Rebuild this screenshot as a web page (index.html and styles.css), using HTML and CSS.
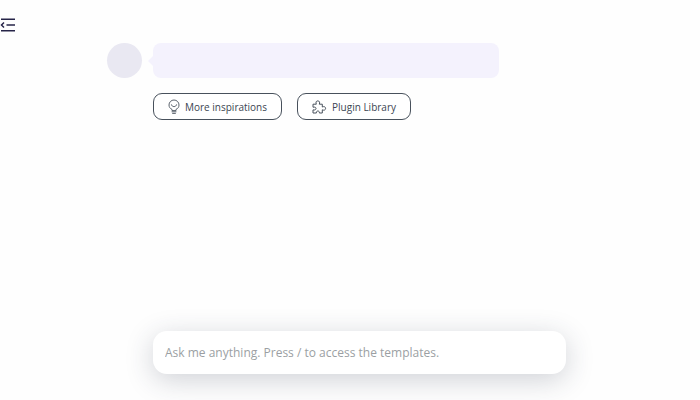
FILE: index.html
```
<!DOCTYPE html>
<html lang="en">
<head>
<meta charset="utf-8">
<title>Chat</title>
<link rel="stylesheet" href="styles.css">
</head>
<body>
  <header class="topbar">
    <button type="button" class="menu_toggle" aria-label="Collapse menu">
      <svg width="16" height="14" viewBox="0 0 16 14" fill="none" stroke="#262448" stroke-width="1.5">
        <path d="M1 1.2H15M6.5 7H15M1 12.8H15"/>
        <path d="M4 4.5L1.5 7L4 9.5"/>
      </svg>
    </button>
  </header>

  <main class="chat">
    <div class="message">
      <div class="avatar"></div>
      <div class="bubble"></div>
    </div>

    <div class="actions">
      <button type="button" class="action">
        <svg width="12" height="16" viewBox="0 0 12 16" fill="none" stroke="#48515c" stroke-width="0.9">
          <path d="M4 10.4C2 9.5 1 8 1 6A5 5 0 0 1 11 6C11 8 10 9.5 8 10.4V11.6H4Z"/>
          <path d="M3.4 5.4C3.7 7 4.8 7.6 6 7.6S8.3 7 8.6 5.4"/>
          <path d="M3.6 12.8H8.4M4.2 14.4H7.8"/>
        </svg>
        More inspirations
      </button>
      <button type="button" class="action">
        <svg width="15" height="14" viewBox="0 0 15 14" fill="none" stroke="#48515c" stroke-width="1" stroke-linejoin="round">
          <path d="M1 4.2H4.3C3.5 2.3 4.2 .9 5.8 .9S8.1 2.3 7.3 4.2H10.3V7C12.1 6.1 13.6 6.9 13.6 8.4S12.1 10.7 10.3 9.8V13H7.4C7.5 11.7 6.9 11 5.9 11S4.3 11.7 4.4 13H1V9.9C3 10.3 4 9.6 4 8.5S3 6.8 1 7.2Z"/>
        </svg>
        Plugin Library
      </button>
    </div>

    <form class="ask">
      <input type="text" class="ask_input" aria-label="Message" placeholder="Ask me anything. Press / to access the templates.">
    </form>
  </main>
</body>
</html>
```
FILE: styles.css
```
*
{
  box-sizing:border-box;
}

body
{
  display:flex;
  flex-direction:column;
  min-height:100vh;
  margin:0;
  background-color:#fefefe;
  font-family:"Open Sans", sans-serif;
}

button, input
{
  font-family:inherit;
}

.topbar
{
  padding-top:18px;
  height:43px;
}

.menu_toggle
{
  display:block;
  padding:0;
  border:0;
  background:none;
}

.menu_toggle svg
{
  display:block;
}

.chat
{
  flex:1;
  display:flex;
  flex-direction:column;
  padding:0 134px 26px 107px;
}

.message
{
  display:flex;
  gap:11px;
  padding-right:67px;
}

.avatar
{
  width:35px;
  height:35px;
  border-radius:50%;
  background-color:#e9e8f2;
}

.bubble
{
  position:relative;
  flex:1;
  min-height:35px;
  border-radius:8px;
  background-color:#f4f2fd;
}

/* little arrow pointing to the avatar */
.bubble::before
{
  content:"";
  position:absolute;
  left:-5px;
  top:12px;
  border-style:solid;
  border-width:6px 6px 6px 0;
  border-color:transparent #f4f2fd;
}

.actions
{
  display:flex;
  flex-wrap:wrap;
  gap:15px;
  padding:15px 0 32px 46px;
}

.action
{
  display:flex;
  align-items:center;
  gap:5px;
  height:27px;
  padding:0 14px;
  border:1px solid #48515c;
  border-radius:9px;
  background-color:#fff;
  color:#3b4552;
  font-size:10px;
}

.ask
{
  margin-top:auto;
  padding-left:46px;
}

.ask_input
{
  display:block;
  width:100%;
  height:43px;
  padding:0 12px;
  border:0;
  border-radius:14px;
  outline:none;
  background-color:#fff;
  box-shadow:0 6px 28px rgba(40, 50, 75, .22);
  font-size:12px;
}

.ask_input::placeholder
{
  color:#9b9fa3;
  opacity:1;
}
```
